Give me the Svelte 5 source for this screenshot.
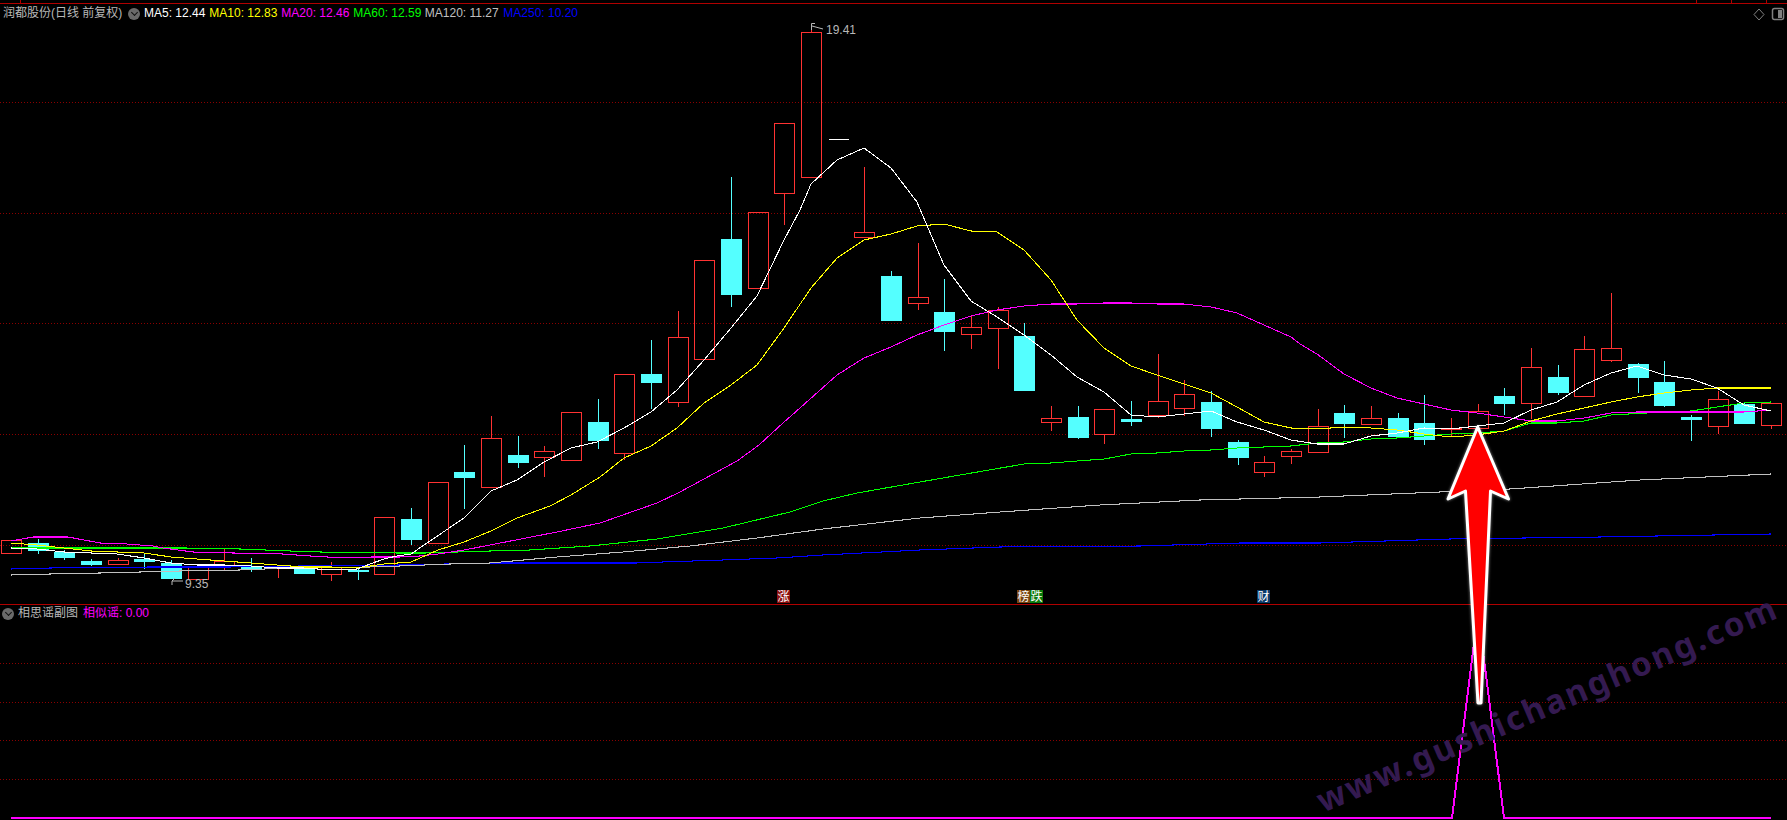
<script>
  const WIDTH = 1787;
  const step = 26.67;
  const cx = (i) => Math.round(10.83 + step * i) + 0.5;

  // [direction, high, body top, body bottom, low], one per trading day
  const candles = [
    ['u', 540, 540, 553, 553], ['d', 539, 543, 550, 554], ['d', 550, 552, 557, 560], ['d', 559, 561, 564, 566],
    ['u', 558, 560, 564, 565], ['d', 553, 559, 561, 569], ['d', 560, 563, 578, 578], ['u', 565, 567, 579, 579],
    ['u', 549, 561, 566, 571], ['d', 558, 566, 569, 572], ['u', 566, 566, 568, 578], ['d', 567, 567, 573, 574],
    ['u', 562, 567, 574, 581], ['d', 568, 570, 571, 580], ['u', 517, 517, 574, 574], ['d', 508, 519, 539, 545],
    ['u', 482, 482, 543, 543], ['d', 445, 472, 477, 509], ['u', 416, 438, 487, 487], ['d', 436, 455, 462, 468],
    ['u', 446, 451, 457, 477], ['u', 412, 412, 460, 460], ['d', 399, 422, 440, 449], ['u', 374, 374, 453, 460],
    ['d', 340, 374, 382, 409], ['u', 311, 337, 402, 407], ['u', 260, 260, 359, 359], ['d', 177, 239, 294, 307],
    ['u', 212, 212, 288, 288], ['u', 123, 123, 193, 225], ['u', 25, 32, 177, 177], ['f', 139, 139, 139, 139],
    ['u', 167, 232, 237, 237], ['d', 271, 276, 320, 320], ['u', 243, 297, 303, 310], ['d', 279, 312, 331, 351],
    ['u', 316, 327, 334, 349], ['u', 307, 310, 328, 369], ['d', 323, 336, 390, 390], ['u', 406, 418, 422, 431],
    ['d', 406, 417, 437, 439], ['u', 409, 409, 434, 444], ['d', 401, 419, 421, 426], ['u', 354, 401, 415, 418],
    ['u', 380, 394, 408, 416], ['d', 391, 402, 428, 437], ['d', 440, 442, 457, 465], ['u', 456, 462, 472, 477],
    ['u', 449, 451, 456, 464], ['u', 409, 426, 452, 452], ['d', 405, 413, 423, 438], ['u', 406, 418, 424, 425],
    ['d', 413, 418, 436, 437], ['d', 395, 423, 439, 445], ['u', 418, 428, 429, 437], ['u', 404, 411, 428, 428],
    ['d', 388, 396, 403, 415], ['u', 348, 367, 403, 419], ['d', 365, 377, 392, 395], ['u', 336, 349, 396, 397],
    ['u', 293, 348, 360, 362], ['d', 363, 364, 377, 393], ['d', 361, 382, 405, 407], ['d', 415, 417, 419, 441],
    ['u', 391, 399, 426, 434], ['d', 403, 404, 423, 424], ['u', 403, 403, 425, 429],
  ];

  const maLines = [
    { color: '#0000ff', points: '11,569 50,568 150,567 230,567 300,566 400,565 490,563 637,563 663,562 723,560 777,558 823,555 920,550 1000,547 1140,546 1240,543 1320,543 1450,539 1600,537 1771,534' },
    { color: '#c0c0c0', points: '11,575 50,574 100,573 140,572 180,571 240,570 290,568 370,567 400,566 450,564 490,563 557,557 623,552 690,546 757,538 823,529 920,518 1000,512 1100,505 1200,500 1320,497 1440,492 1510,489 1640,480 1771,474' },
    { color: '#00ff00', points: '11,548 185,548 240,549 290,551 320,552 397,553 425,553 490,551 530,550 590,546 657,539 723,528 790,512 823,501 857,493 920,482 960,475 1024,464 1051,463 1077,461 1104,459 1131,454 1157,453 1184,451 1211,450 1237,448 1264,447 1291,446 1317,443 1344,442 1371,439 1397,438 1424,436 1451,434 1477,433 1504,431 1531,423 1557,423 1584,421 1611,415 1664,412 1691,411 1717,407 1744,403 1771,402' },
    { color: '#ff00ff', points: '11,541 33,537 68,537 100,543 127,544 153,546 163,548 193,552 233,553 283,554 310,556 345,558 372,557 400,557 420,556 438,554 464,550 490,545 557,532 600,523 657,503 680,492 737,461 759,445 783,423 809,400 837,375 864,358 891,347 917,335 944,325 971,316 997,310 1024,306 1051,304 1077,304 1104,303 1131,303 1157,304 1184,304 1211,307 1237,313 1264,325 1291,337 1300,344 1317,354 1344,374 1371,388 1397,398 1424,404 1451,410 1477,413 1504,417 1531,421 1557,421 1584,418 1611,413 1637,412 1664,412 1691,412 1717,412 1744,412 1771,410' },
    { color: '#ffff00', points: '11,543 37,545 64,548 91,551 117,552 144,553 171,557 197,559 224,561 251,563 277,565 304,567 331,567 357,568 384,564 411,562 438,550 464,542 491,531 517,518 550,506 571,495 600,477 624,458 651,446 677,428 704,403 731,385 757,365 784,328 811,288 837,258 864,240 891,234 917,226 944,224 971,231 997,232 1024,250 1051,280 1077,320 1104,348 1131,366 1157,375 1184,384 1211,393 1237,407 1264,422 1291,428 1317,429 1344,427 1371,428 1397,430 1424,434 1451,437 1477,435 1504,431 1531,421 1557,414 1584,408 1611,402 1637,397 1664,393 1691,390 1717,388 1744,388 1771,388' },
    { color: '#ffffff', points: '11,548 37,549 64,552 91,553 117,554 144,558 171,563 197,565 224,565 251,566 277,568 304,568 331,570 357,569 370,564 384,559 397,556 411,554 427,543 464,518 491,491 517,480 544,462 571,448 597,442 624,428 651,412 677,390 704,360 731,328 757,296 784,240 800,210 811,184 837,160 864,148 891,168 917,202 944,265 971,301 997,317 1024,335 1051,355 1077,377 1104,392 1131,415 1157,417 1184,414 1211,411 1237,422 1264,430 1291,440 1317,444 1344,444 1371,436 1397,433 1424,428 1451,429 1477,426 1504,423 1531,410 1557,402 1584,385 1611,373 1637,366 1664,375 1691,379 1717,388 1744,405 1771,411' },
  ];

  const legend = [
    { label: 'MA5: 12.44', color: '#ffffff', width: 65.3 },
    { label: 'MA10: 12.83', color: '#ffff00', width: 72 },
    { label: 'MA20: 12.46', color: '#ff00ff', width: 72 },
    { label: 'MA60: 12.59', color: '#00ff00', width: 71.5 },
    { label: 'MA120: 11.27', color: '#c0c0c0', width: 78.5 },
    { label: 'MA250: 10.20', color: '#0000ff', width: 73 },
  ];

  const mainGrid = [102, 213, 323, 434, 545];
  const subGrid = [663, 702, 740, 779];
  const topTicks = [20, 1696, 1731, 1766];

  const events = [
    { x: 777, text: '涨', bg: '#8b1010' },
    { x: 1017, text: '榜', bg: '#7a4410' },
    { x: 1030, text: '跌', bg: '#0a7a0a' },
    { x: 1257, text: '财', bg: '#0a3a6a' },
  ];
</script>

<div class="terminal">
  <section class="pane main-pane">
    <svg class="plot" viewBox="0 0 {WIDTH} 604" width={WIDTH} height="604">
      <line class="frame" x1="0" x2={WIDTH} y1="3.5" y2="3.5" />
      {#each topTicks as x}
        <line class="frame" x1={x + 0.5} x2={x + 0.5} y1="0" y2="3" />
      {/each}
      {#each mainGrid as y}
        <line class="grid" x1="0" x2={WIDTH} y1={y + 0.5} y2={y + 0.5} />
      {/each}

      {#each candles as [dir, high, top, bottom, low], i}
        {#if dir === 'f'}
          <line class="flat" x1={cx(i) - 10} x2={cx(i) + 10} y1={top + 0.5} y2={top + 0.5} />
        {:else}
          <g class={dir === 'u' ? 'up' : 'down'}>
            {#if high < top}<line x1={cx(i)} x2={cx(i)} y1={high} y2={top} />{/if}
            {#if low > bottom}<line x1={cx(i)} x2={cx(i)} y1={bottom} y2={low} />{/if}
            <rect x={cx(i) - 10} y={top + 0.5} width="20" height={bottom - top} />
          </g>
        {/if}
      {/each}

      {#each maLines as ma}
        <polyline class="ma" points={ma.points} stroke={ma.color} />
      {/each}

      <path class="note" d="M811.5 30V23.5H815M812 26L823 29" />
      <text class="price" x="826" y="34">19.41</text>
      <path class="note" d="M183 581H172M172 581L175 578M172 581V585" />
      <text class="price" x="185" y="588">9.35</text>

      {#each events as ev}
        <rect x={ev.x} y="590" width="13" height="13" fill={ev.bg} />
        <text class="event" x={ev.x + 0.5} y="601">{ev.text}</text>
      {/each}

      <path class="tool" d="M1759 9L1764 14.5L1759 20L1754 14.5Z" />
      <rect class="tool-box" x="1772.5" y="8.5" width="11" height="11" rx="2" />
      <rect x="1778" y="10" width="4" height="8" fill="#808080" />
    </svg>

    <header class="legend">
      <span class="title">润都股份(日线 前复权)</span>
      <span class="chevron"></span>
      {#each legend as item}
        <span class="ma-label" style="color:{item.color}; width:{item.width}px">{item.label}</span>
      {/each}
    </header>
  </section>

  <section class="pane sub-pane">
    <svg class="plot" viewBox="0 604 {WIDTH} 216" width={WIDTH} height="216">
      <line class="frame" x1="0" x2={WIDTH} y1="604.5" y2="604.5" />
      {#each subGrid as y}
        <line class="grid" x1="0" x2={WIDTH} y1={y + 0.5} y2={y + 0.5} />
      {/each}
      <polyline class="signal" points="11,818 1452,818 1478,612 1504,818 1771,818" />
    </svg>

    <header class="legend sub-legend">
      <span class="chevron"></span>
      <span class="title">相思谣副图</span>
      <span class="sub-value">相似谣: 0.00</span>
    </header>
  </section>

  <svg class="overlay" viewBox="0 0 {WIDTH} 820" width={WIDTH} height="820">
    <text class="watermark" transform="translate(1323 813) rotate(-23.2)" textLength="496">www.gushichanghong.com</text>
    <path class="arrow" d="M1477.7 427L1508.5 499L1490.5 491L1481 703L1478 703L1465.5 491L1448 499Z" />
  </svg>
</div>

<style>
  :global(body) { margin: 0; background: #000; }

  .terminal {
    position: relative;
    display: flex;
    flex-direction: column;
    width: 1787px;
    height: 820px;
    overflow: hidden;
    background: #000;
    font-family: "Liberation Sans", "Noto Sans CJK SC", sans-serif;
    font-size: 12px;
  }

  .pane { position: relative; }
  .main-pane { height: 604px; }
  .sub-pane { height: 216px; }
  .plot { display: block; }

  .legend {
    position: absolute;
    top: 6px;
    left: 3px;
    display: flex;
    align-items: center;
    height: 15px;
    line-height: 15px;
    white-space: nowrap;
  }
  .title { color: #b8b8b8; width: 125px; }
  .chevron {
    position: relative;
    flex: none;
    width: 12px;
    height: 12px;
    margin-right: 4px;
    border-radius: 50%;
    background: #6a6a6a;
  }
  .chevron::after {
    content: "";
    position: absolute;
    left: 3.5px;
    top: 2px;
    width: 4px;
    height: 4px;
    border-right: 1.5px solid #111;
    border-bottom: 1.5px solid #111;
    transform: rotate(45deg);
  }
  .ma-label { flex: none; }

  .sub-legend { top: 2px; left: 2px; }
  .sub-legend .title { width: 65px; }
  .sub-value { color: #ff00ff; }

  .frame { stroke: #b00000; stroke-width: 1; shape-rendering: crispEdges; }
  .grid { stroke: #8a0000; stroke-width: 1; stroke-dasharray: 1 2; shape-rendering: crispEdges; }

  .up line, .up rect { stroke: #ff3232; stroke-width: 1; fill: none; shape-rendering: crispEdges; }
  .down line { stroke: #54ffff; stroke-width: 1; shape-rendering: crispEdges; }
  .down rect { fill: #54ffff; stroke: #54ffff; stroke-width: 1; shape-rendering: crispEdges; }
  .flat { stroke: #ffffff; stroke-width: 1; shape-rendering: crispEdges; }

  .ma { fill: none; stroke-width: 1.05; shape-rendering: crispEdges; }
  .signal { fill: none; stroke: #ff00ff; stroke-width: 2; shape-rendering: crispEdges; }

  .note { fill: none; stroke: #b8b8b8; stroke-width: 1; }
  .price { fill: #b8b8b8; font-size: 12px; }
  .event { fill: #fff; font-size: 12px; }
  .tool { fill: none; stroke: #808080; stroke-width: 1; }
  .tool-box { fill: none; stroke: #808080; stroke-width: 1.5; }

  .overlay { position: absolute; top: 0; left: 0; pointer-events: none; }
  .watermark {
    fill: #341a50;
    font-family: "Noto Sans", sans-serif;
    font-size: 33px;
    font-weight: 700;
  }
  .arrow {
    fill: #ff0000;
    stroke: #ffffff;
    stroke-width: 3;
    stroke-linejoin: round;
    filter: drop-shadow(0 0 1.5px rgba(255, 255, 255, 0.55));
  }
</style>
